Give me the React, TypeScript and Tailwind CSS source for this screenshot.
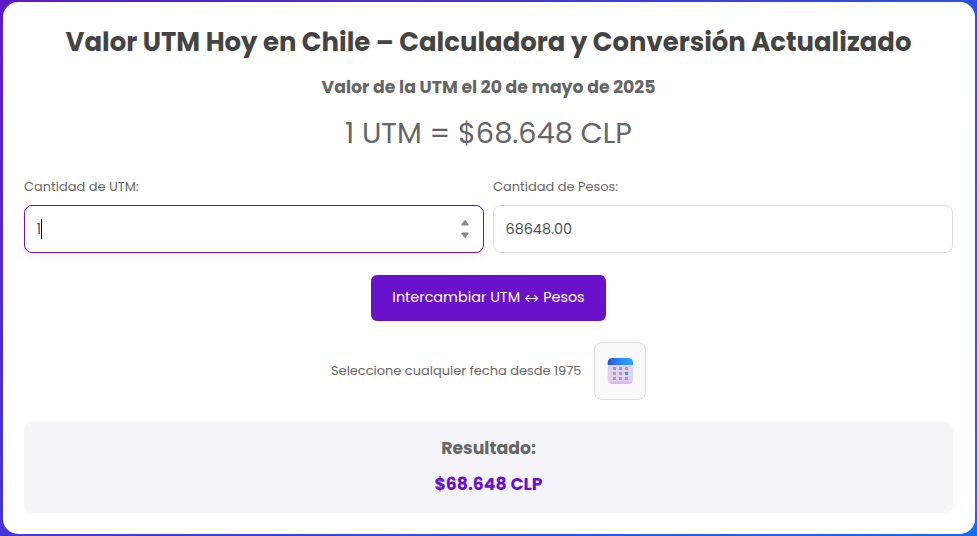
import { useState } from 'react';

const UTM_VALUE = 68648;

const formatPesos = (value: number) =>
  `$${Math.round(value).toString().replace(/\B(?=(\d{3})+(?!\d))/g, '.')} CLP`;

const CalendarIcon = () => (
  <svg width="26" height="26" viewBox="0 0 26 26">
    <defs>
      <linearGradient id="calendar-top" x1="0" y1="0" x2="1" y2="0">
        <stop offset="0" stopColor="#2a53d6" />
        <stop offset="0.45" stopColor="#2488f7" />
        <stop offset="1" stopColor="#2fa5ff" />
      </linearGradient>
      <linearGradient id="calendar-body" x1="0" y1="0" x2="0" y2="1">
        <stop offset="0" stopColor="#dfd3ec" />
        <stop offset="0.8" stopColor="#e0d0ef" />
        <stop offset="1" stopColor="#d3b4ea" />
      </linearGradient>
    </defs>
    <path d="M.7 6H26V21.500A4.500 4.500 0 0 1 21.500 26H5.200A4.500 4.500 0 0 1 .7 21.500Z" fill="url(#calendar-body)" />
    <path d="M.7 7V4.500A4.500 4.500 0 0 1 5.200 0H21.500A4.500 4.500 0 0 1 26 4.500V7Z" fill="url(#calendar-top)" />
    {[9, 14, 19].map((y) =>
      [6, 12, 18].map((x) => (
        <rect
          key={`${x}-${y}`}
          x={x}
          y={y}
          width="3"
          height="3"
          rx="0.3"
          fill={x === 18 && y === 14 ? '#2f97f8' : '#a79ab6'}
        />
      ))
    )}
  </svg>
);

const Spinner = () => (
  <div className="flex h-[22px] w-3 flex-col items-center justify-between bg-[#fbfbfb] py-0.5 text-[#8b8b8b]">
    <svg width="8" height="6" viewBox="0 0 8 6" fill="currentColor">
      <path d="M3.3.4Q4-.2 4.7.4L7.5 4.2Q8 5.5 7 5.5H1Q0 5.5.5 4.2Z" />
    </svg>
    <svg width="8" height="6" viewBox="0 0 8 6" fill="currentColor">
      <path d="M3.3 5.6Q4 6.2 4.7 5.6L7.5 1.8Q8 .5 7 .5H1Q0 .5.5 1.8Z" />
    </svg>
  </div>
);

const App = () => {
  const [amount] = useState(1);

  return (
    <div className="h-[536px] w-full bg-[linear-gradient(135deg,#5f18cc,#126cf2)] pt-0.5 pr-0.5 pb-0.5 pl-[3px] font-[Poppins,Inter,sans-serif] text-[#666]">
      <main className="flex h-full flex-col rounded-[15px] bg-white pt-5 pr-[22px] pl-[21px]">
        <h1 className="h-10 text-center text-[25.92px] leading-10 font-bold whitespace-nowrap text-[#444]">
          Valor UTM Hoy en Chile – Calculadora y Conversión Actualizado
        </h1>
        <h2 className="mt-3 h-[26px] text-center text-[17.28px] leading-[26px] font-bold">
          Valor de la UTM el 20 de mayo de 2025
        </h2>
        <p className="mt-[13px] h-10 text-center text-[28.8px] leading-10">1 UTM = {formatPesos(UTM_VALUE)}</p>
        <div className="mt-6 grid grid-cols-2 gap-[9px]">
          <div>
            <div className="h-5 text-[12.96px] leading-5">Cantidad de UTM:</div>
            <div className="mt-2 flex h-12 items-center justify-between rounded-lg border border-[#6a11cb] pr-[12.5px] pl-[11.5px] text-[14.4px] text-[#495057] shadow-[0_4px_12px_rgba(0,0,0,0.05)]">
              <div className="flex items-center">
                <span className="pt-px">{amount}</span>
                <i className="h-5 w-px bg-black" />
              </div>
              <Spinner />
            </div>
          </div>
          <div>
            <div className="h-5 text-[12.96px] leading-5">Cantidad de Pesos:</div>
            <div className="mt-2 flex h-12 items-center rounded-lg border border-[#ddd] pt-px pl-[11.5px] text-[14.4px] text-[#495057]">
              {(amount * UTM_VALUE).toFixed(2)}
            </div>
          </div>
        </div>
        <button className="mt-[22px] h-[46px] w-[235px] self-center rounded-md bg-[#6a11cb] pb-0.5 text-[14.4px] leading-5 whitespace-nowrap text-white">
          Intercambiar UTM <span className="text-[11.5px]">↔</span> Pesos
        </button>
        <div className="mt-[21px] flex h-[58px] items-center justify-center gap-[13px]">
          <span className="w-[250px] text-[12.96px] whitespace-nowrap">Seleccione cualquier fecha desde 1975</span>
          <button className="flex h-[58px] w-[52px] items-center justify-center rounded-lg border border-[#ddd] bg-[#f9f9f9]">
            <CalendarIcon />
          </button>
        </div>
        <section className="mt-[22px] flex h-[91px] flex-col items-center rounded-lg bg-[#f4f4f9] pt-3.5 font-bold">
          <h3 className="h-6 text-[17.28px] leading-6">Resultado:</h3>
          <p className="mt-3 h-6 text-[17.28px] leading-6 text-[#6a11cb]">{formatPesos(amount * UTM_VALUE)}</p>
        </section>
      </main>
    </div>
  );
};

export default App;
